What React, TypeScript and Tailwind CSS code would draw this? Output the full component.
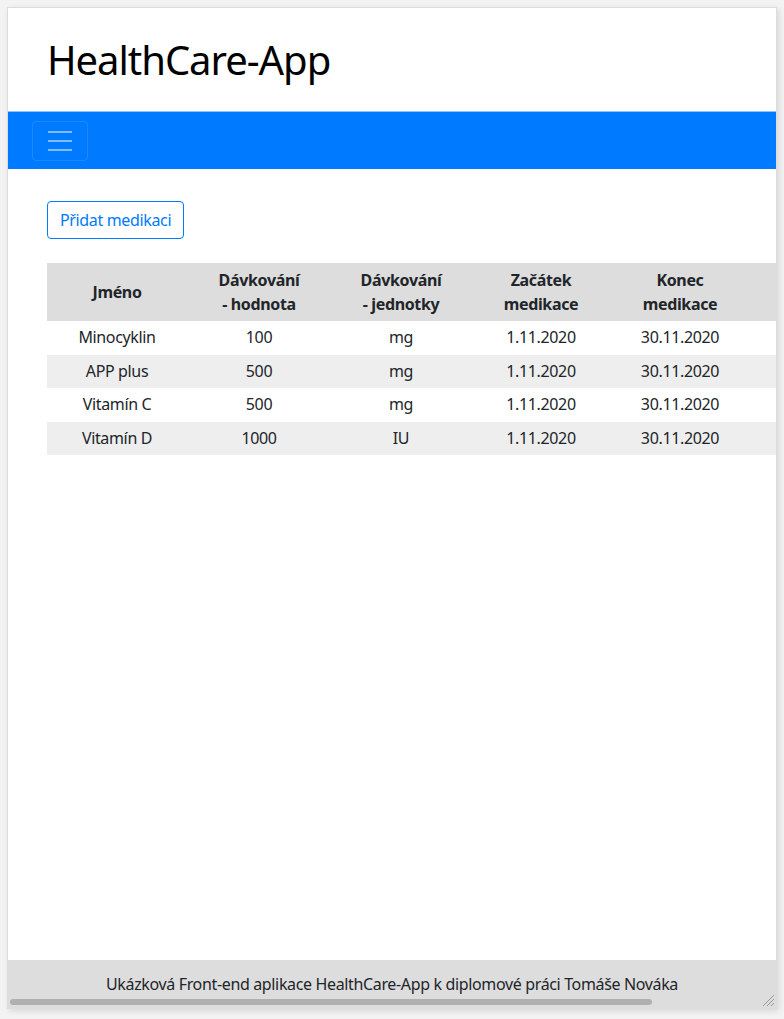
import React from "react";

const rows = [
  ["Minocyklin", "100", "mg", "1.11.2020", "30.11.2020"],
  ["APP plus", "500", "mg", "1.11.2020", "30.11.2020"],
  ["Vitamín C", "500", "mg", "1.11.2020", "30.11.2020"],
  ["Vitamín D", "1000", "IU", "1.11.2020", "30.11.2020"],
];

export default function App() {
  return (
    <div
      className="w-[784px] h-[1019px] bg-[#f3f3f3] pt-[7px] pl-[7px] tracking-[-0.022em]"
      style={{ fontFamily: '"Noto Sans", "Open Sans", sans-serif' }}
    >
      <div className="relative w-[770px] h-[1002px] bg-white border border-[#dcdcdc] shadow-[2px_2px_6px_rgba(0,0,0,0.12)] overflow-hidden flex flex-col text-[#212529]">
        <header className="pl-[39px] pt-[28px] pb-[27px] border-b border-[#8ec3ff]">
          <h1 className="text-[40px] leading-[48px] text-black tracking-[-0.026em]">HealthCare-App</h1>
        </header>
        <nav className="bg-[#007bff] h-[57px] pl-[24px] py-[8px] flex items-center">
          <button className="w-[56px] h-[40px] rounded-[4px] border border-white/10 flex flex-col items-center justify-center gap-[7px]">
            <span className="block w-[24px] h-[2px] bg-white/50" />
            <span className="block w-[24px] h-[2px] bg-white/50" />
            <span className="block w-[24px] h-[2px] bg-white/50" />
          </button>
        </nav>
        <main className="flex-1 pl-[39px] pt-[32px]">
          <button className="h-[38px] px-[12px] rounded-[4px] border border-[#007bff] text-[#007bff] text-[16px] leading-[24px]">
            Přidat medikaci
          </button>
          <table className="mt-[24px] w-[820px] table-fixed border-collapse text-[16px] leading-[23.5px] text-center">
            <colgroup>
              <col className="w-[140px]" />
              <col className="w-[144px]" />
              <col className="w-[140px]" />
              <col className="w-[140px]" />
              <col className="w-[138px]" />
              <col />
            </colgroup>
            <thead>
              <tr className="bg-[#dddddd] font-bold">
                <th className="py-[5px] leading-[24px] font-bold">Jméno</th>
                <th className="py-[5px] leading-[24px] font-bold">
                  Dávkování
                  <br />- hodnota
                </th>
                <th className="py-[5px] leading-[24px] font-bold">
                  Dávkování
                  <br />- jednotky
                </th>
                <th className="py-[5px] leading-[24px] font-bold">
                  Začátek
                  <br />
                  medikace
                </th>
                <th className="py-[5px] leading-[24px] font-bold">
                  Konec
                  <br />
                  medikace
                </th>
                <th className="py-[5px]" />
              </tr>
            </thead>
            <tbody>
              {rows.map((r, i) => (
                <tr key={i} className={i % 2 === 1 ? "bg-[#eeeeee]" : "bg-white"}>
                  {r.map((c, j) => (
                    <td key={j} className="py-[5px]">
                      {c}
                    </td>
                  ))}
                  <td className="py-[5px]" />
                </tr>
              ))}
            </tbody>
          </table>
        </main>
        <footer className="h-[48px] bg-[#dddddd] text-center text-[16px] leading-[24px] pt-[12px]">
          Ukázková Front-end aplikace HealthCare-App k diplomové práci Tomáše Nováka
        </footer>
        <div className="absolute left-[2px] bottom-[3px] w-[642px] h-[6px] rounded-full bg-[#b0b0b0]" />
        <svg className="absolute right-[1px] bottom-[1px]" width="13" height="13" viewBox="0 0 13 13">
          <line x1="12" y1="1" x2="1" y2="12" stroke="#9a9a9a" strokeWidth="1" />
          <line x1="12" y1="5" x2="5" y2="12" stroke="#9a9a9a" strokeWidth="1" />
          <line x1="12" y1="9" x2="9" y2="12" stroke="#9a9a9a" strokeWidth="1" />
        </svg>
      </div>
    </div>
  );
}
